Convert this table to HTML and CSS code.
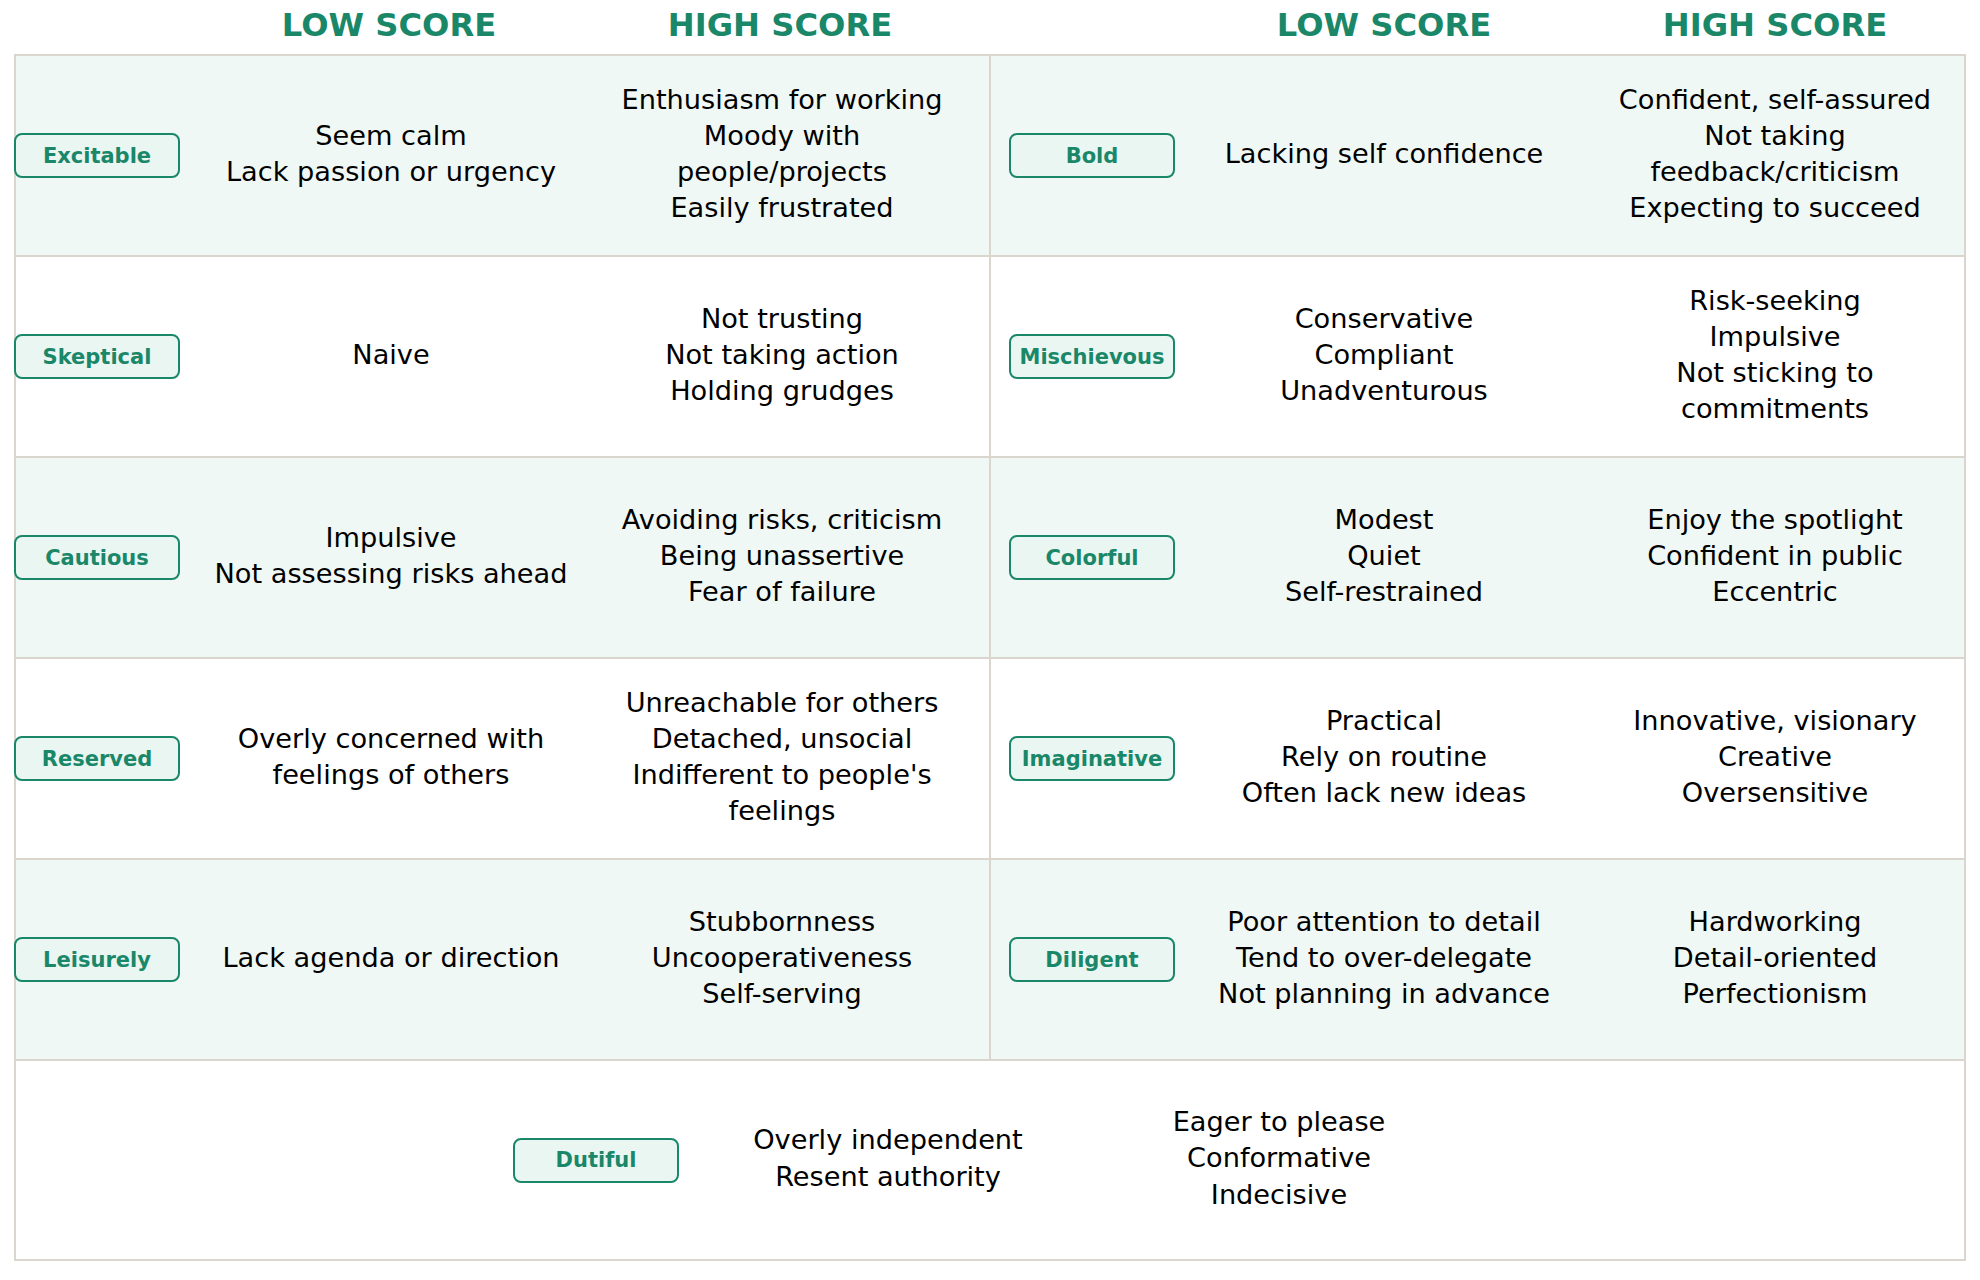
FILE: index.html
```html
<!DOCTYPE html>
<html>
<head>
<meta charset="utf-8">
<link rel="stylesheet" href="styles.css">
</head>
<body>
<div class="page">
  <div class="head">
    <div class="trio"><span></span><span class="h">LOW SCORE</span><span class="h">HIGH SCORE</span></div>
    <div class="trio"><span></span><span class="h">LOW SCORE</span><span class="h">HIGH SCORE</span></div>
  </div>
  <div class="table">
    <div class="row tint">
      <div class="half left trio"><span class="badge">Excitable</span><span class="cell">Seem calm<br>Lack passion or urgency</span><span class="cell">Enthusiasm for working<br>Moody with<br>people/projects<br>Easily frustrated</span></div>
      <div class="half right trio"><span class="badge">Bold</span><span class="cell">Lacking self confidence</span><span class="cell">Confident, self-assured<br>Not taking<br>feedback/criticism<br>Expecting to succeed</span></div>
    </div>
    <div class="row">
      <div class="half left trio"><span class="badge">Skeptical</span><span class="cell">Naive</span><span class="cell">Not trusting<br>Not taking action<br>Holding grudges</span></div>
      <div class="half right trio"><span class="badge">Mischievous</span><span class="cell">Conservative<br>Compliant<br>Unadventurous</span><span class="cell">Risk-seeking<br>Impulsive<br>Not sticking to<br>commitments</span></div>
    </div>
    <div class="row tint">
      <div class="half left trio"><span class="badge">Cautious</span><span class="cell">Impulsive<br>Not assessing risks ahead</span><span class="cell">Avoiding risks, criticism<br>Being unassertive<br>Fear of failure</span></div>
      <div class="half right trio"><span class="badge">Colorful</span><span class="cell">Modest<br>Quiet<br>Self-restrained</span><span class="cell">Enjoy the spotlight<br>Confident in public<br>Eccentric</span></div>
    </div>
    <div class="row">
      <div class="half left trio"><span class="badge">Reserved</span><span class="cell">Overly concerned with<br>feelings of others</span><span class="cell">Unreachable for others<br>Detached, unsocial<br>Indifferent to people's<br>feelings</span></div>
      <div class="half right trio"><span class="badge">Imaginative</span><span class="cell">Practical<br>Rely on routine<br>Often lack new ideas</span><span class="cell">Innovative, visionary<br>Creative<br>Oversensitive</span></div>
    </div>
    <div class="row tint">
      <div class="half left trio"><span class="badge">Leisurely</span><span class="cell">Lack agenda or direction</span><span class="cell">Stubbornness<br>Uncooperativeness<br>Self-serving</span></div>
      <div class="half right trio"><span class="badge">Diligent</span><span class="cell">Poor attention to detail<br>Tend to over-delegate<br>Not planning in advance</span><span class="cell">Hardworking<br>Detail-oriented<br>Perfectionism</span></div>
    </div>
    <div class="row last">
      <div class="single trio"><span class="badge">Dutiful</span><span class="cell">Overly independent<br>Resent authority</span><span class="cell">Eager to please<br>Conformative<br>Indecisive</span></div>
    </div>
  </div>
</div>
</body>
</html>
```
FILE: styles.css
```css
html, body {
  margin: 0;
  padding: 0;
  background: #ffffff;
}
body {
  font-family: "DejaVu Sans", "Liberation Sans", sans-serif;
  color: #000000;
}
.page {
  margin-left: 14px;
  width: 1952px;
}
.trio {
  display: grid;
  grid-template-columns: 166px 418px 364px;
  align-items: center;
}
.head {
  display: grid;
  grid-template-columns: 995px 1fr;
  height: 54px;
  box-sizing: border-box;
  padding-top: 8px;
  align-items: start;
}
.h {
  font-size: 32.2px;
  line-height: 35px;
  font-weight: bold;
  color: #1a8769;
  text-align: center;
  white-space: nowrap;
}
.table {
  border: 2px solid #dad6ce;
  box-sizing: border-box;
  width: 1952px;
}
.row {
  display: grid;
  grid-template-columns: 973px 975px;
  height: 199px;
  border-bottom: 2px solid #dad6ce;
}
.row.last {
  display: block;
  border-bottom: none;
  height: 198px;
}
.tint {
  background: #f0f8f5;
}
.half {
  height: 199px;
}
.half.left .badge {
  margin-left: -2px;
}
.half.right {
  border-left: 2px solid #dad6ce;
  padding-left: 18px;
}
.single {
  height: 198px;
  padding-left: 497px;
}
.badge {
  box-sizing: border-box;
  width: 166px;
  height: 45px;
  border: 2.5px solid #1a8769;
  border-radius: 8px;
  background: #e9f6f2;
  color: #1a8769;
  font-weight: bold;
  font-size: 21px;
  display: flex;
  align-items: center;
  justify-content: center;
  white-space: nowrap;
}
.cell {
  font-size: 27.2px;
  line-height: 36.2px;
  padding-bottom: 3px;
  text-align: center;
  white-space: nowrap;
}
```
